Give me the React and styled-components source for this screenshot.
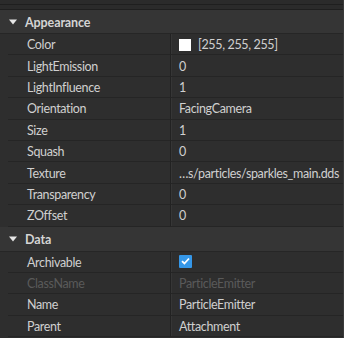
import React from "react";
import styled, { createGlobalStyle } from "styled-components";

const Global = createGlobalStyle`
  html, body { margin: 0; padding: 0; background: #2e2e2e; }
  body { font-family: "Lato", "Noto Sans", sans-serif; }
`;

const Panel = styled.div`
  width: 344px;
  height: 338px;
  overflow: hidden;
  background: #2e2e2e;
  display: flex;
  flex-direction: column;
  border-right: 1px solid #3a3a3a;
  box-sizing: border-box;
`;

const TopStrip = styled.div`
  height: 4px;
  background: #2b2b2b;
  border-bottom: 1px solid #1f1f1f;
  flex: none;
`;

const Header = styled.div`
  height: ${(p) => p.$h}px;
  flex: none;
  box-sizing: border-box;
  background: #353535;
  border-bottom: 1px solid #262626;
  display: flex;
  align-items: center;
  padding: 1px 0 0 9px;
  gap: 8px;
  color: #d4d4d4;
  font-weight: 700;
  font-size: 12.5px;
  letter-spacing: -0.1px;
`;

const Arrow = styled.svg`
  width: 8px;
  height: 6px;
  flex: none;
`;

const Row = styled.div`
  height: 21.4px;
  flex: none;
  box-sizing: border-box;
  display: grid;
  grid-template-columns: 170px 1fr;
  font-size: 12.5px;
  letter-spacing: -0.35px;
  color: ${(p) => (p.$disabled ? "#5a5a5a" : "#d0d0d0")};
`;

const NameCell = styled.div`
  display: flex;
  align-items: center;
  margin-left: 8px;
  padding: 1px 0 0 19px;
  border-bottom: 1px solid #252525;
  white-space: nowrap;
`;

const ValueCell = styled.div`
  display: flex;
  align-items: center;
  gap: 7px;
  padding: 1px 0 0 8px;
  border-left: 1px solid #222222;
  box-shadow: inset 1px 0 0 #363636;
  border-bottom: 1px solid #252525;
  white-space: nowrap;
  overflow: hidden;
`;

const Swatch = styled.span`
  width: 12px;
  height: 12px;
  background: #ffffff;
  flex: none;
`;

const Check = styled.span`
  width: 13px;
  height: 13px;
  background: #3597e8;
  border-radius: 1px;
  display: flex;
  align-items: center;
  justify-content: center;
  flex: none;
  margin-top: -2px;
`;

const Section = ({ title, h, rows }) => (
  <>
    <Header $h={h}>
      <Arrow viewBox="0 0 8 6">
        <path d="M0 0.5 L8 0.5 L4 5.5 Z" fill="#e6e6e6" />
      </Arrow>
      {title}
    </Header>
    {rows.map((r) => (
      <Row key={r.name} $disabled={r.disabled}>
        <NameCell>{r.name}</NameCell>
        <ValueCell>
          {r.swatch && <Swatch />}
          {r.check && (
            <Check>
              <svg width="9" height="8" viewBox="0 0 9 8">
                <path d="M1 4.2 L3.4 6.5 L8 1.5" stroke="#fff" strokeWidth="1.8" fill="none" />
              </svg>
            </Check>
          )}
          {r.value}
        </ValueCell>
      </Row>
    ))}
  </>
);

const appearance = [
  { name: "Color", value: "[255, 255, 255]", swatch: true },
  { name: "LightEmission", value: "0" },
  { name: "LightInfluence", value: "1" },
  { name: "Orientation", value: "FacingCamera" },
  { name: "Size", value: "1" },
  { name: "Squash", value: "0" },
  { name: "Texture", value: "…s/particles/sparkles_main.dds" },
  { name: "Transparency", value: "0" },
  { name: "ZOffset", value: "0" },
];

const data = [
  { name: "Archivable", check: true },
  { name: "ClassName", value: "ParticleEmitter", disabled: true },
  { name: "Name", value: "ParticleEmitter" },
  { name: "Parent", value: "Attachment" },
];

export default function App() {
  return (
    <>
      <Global />
      <Panel>
        <TopStrip />
        <TopStrip />
        <Section title="Appearance" h={24} rows={appearance} />
        <Section title="Data" h={25} rows={data} />
      </Panel>
    </>
  );
}
